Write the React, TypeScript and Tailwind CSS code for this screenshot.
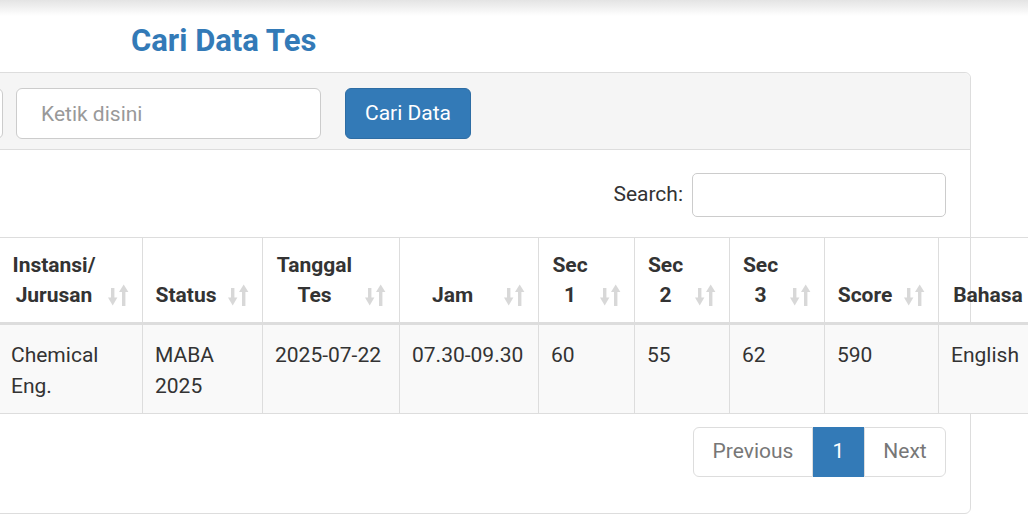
import React from "react";

type Column = { label: string[]; width: number; sortable: boolean };

const columns: Column[] = [
  { label: ["Instansi/", "Jurusan"], width: 144, sortable: true },
  { label: ["Status"], width: 120, sortable: true },
  { label: ["Tanggal", "Tes"], width: 137, sortable: true },
  { label: ["Jam"], width: 139, sortable: true },
  { label: ["Sec", "1"], width: 96, sortable: true },
  { label: ["Sec", "2"], width: 95, sortable: true },
  { label: ["Sec", "3"], width: 95, sortable: true },
  { label: ["Score"], width: 114, sortable: true },
  { label: ["Bahasa"], width: 132, sortable: true },
];

const rows = [["Chemical Eng.", "MABA 2025", "2025-07-22", "07.30-09.30", "60", "55", "62", "590", "English"]];

// glyphicon-sort style: down arrow on the left, up arrow on the right
const SortIcon = () => (
  <svg width="21" height="22" viewBox="0 0 21 22" className="absolute right-[13px] bottom-[16px]">
    <rect x="3" y="4" width="3.4" height="11" fill="#d8d8d8" />
    <polygon points="0,13.5 9.4,13.5 4.7,21.5" fill="#d8d8d8" />
    <polygon points="11,8 20.4,8 15.7,0.5" fill="#d8d8d8" />
    <rect x="14" y="7" width="3.4" height="15" fill="#d8d8d8" />
  </svg>
);

const App = () => {
  return (
    <div className="relative h-[528px] w-[1028px] overflow-hidden bg-white font-['Roboto',sans-serif] text-[#333]">
      <div className="h-[16px] bg-gradient-to-b from-[#e4e4e4] to-white" />
      <h3 className="ml-[131px] mt-[7px] text-[31px] font-bold leading-[36px] text-[#337ab7]">Cari Data Tes</h3>

      <div className="-ml-[24px] mt-[13px] w-[995px] rounded-[6px] border border-[#ddd]">
        <div className="flex items-center rounded-t-[6px] border-b border-[#ddd] bg-[#f5f5f5] pt-[15px] pb-[10px]">
          <div className="h-[51px] w-[26px] rounded-r-[6px] border border-[#ccc] bg-white" />
          <input
            className="ml-[13px] h-[51px] w-[305px] rounded-[6px] border border-[#ccc] bg-white pl-[24px] text-[21px] outline-none placeholder:text-[#999]"
            placeholder="Ketik disini"
          />
          <button className="ml-[24px] h-[51px] w-[126px] rounded-[6px] border border-[#2e6da4] bg-[#337ab7] text-[21px] text-white">
            Cari Data
          </button>
        </div>

        <div className="pl-[21px] pr-[24px] pt-[23px] pb-[36px]">
          <div className="flex h-[44px] items-center justify-end">
            <label className="mr-[9px] text-[21px]">Search:</label>
            <input className="h-[44px] w-[254px] rounded-[5px] border border-[#ccc] bg-white outline-none" />
          </div>

          <table className="mt-[20px] table-fixed border-collapse" style={{ width: 1072 }}>
            <colgroup>
              {columns.map((c, i) => (
                <col key={i} style={{ width: c.width }} />
              ))}
            </colgroup>
            <thead>
              <tr>
                {columns.map((c, i) => (
                  <th
                    key={i}
                    className="relative border border-b-[3px] border-[#ddd] pl-[12px] pr-[45px] py-[12px] text-center align-bottom text-[21px] font-bold leading-[30px]"
                  >
                    {c.label.map((l, j) => (
                      <div key={j}>{l}</div>
                    ))}
                    {c.sortable && <SortIcon />}
                  </th>
                ))}
              </tr>
            </thead>
            <tbody>
              {rows.map((r, i) => (
                <tr key={i} className="bg-[#f9f9f9]">
                  {r.map((v, j) => (
                    <td
                      key={j}
                      className={`border border-[#ddd] px-[12px] pt-[15px] pb-[11px] align-top text-[21px] leading-[31px] ${j >= 2 ? "whitespace-nowrap" : ""}`}
                    >
                      {v}
                    </td>
                  ))}
                </tr>
              ))}
            </tbody>
          </table>

          <div className="mt-[13px] flex justify-end">
            <div className="flex h-[50px] text-[21px] text-[#777]">
              <span className="flex w-[120px] items-center justify-center rounded-l-[6px] border border-[#ddd] bg-white">Previous</span>
              <span className="flex w-[51px] items-center justify-center border border-[#337ab7] bg-[#337ab7] text-white">1</span>
              <span className="flex w-[82px] items-center justify-center rounded-r-[6px] border border-[#ddd] bg-white">Next</span>
            </div>
          </div>
        </div>
      </div>
    </div>
  );
};

export default App;
